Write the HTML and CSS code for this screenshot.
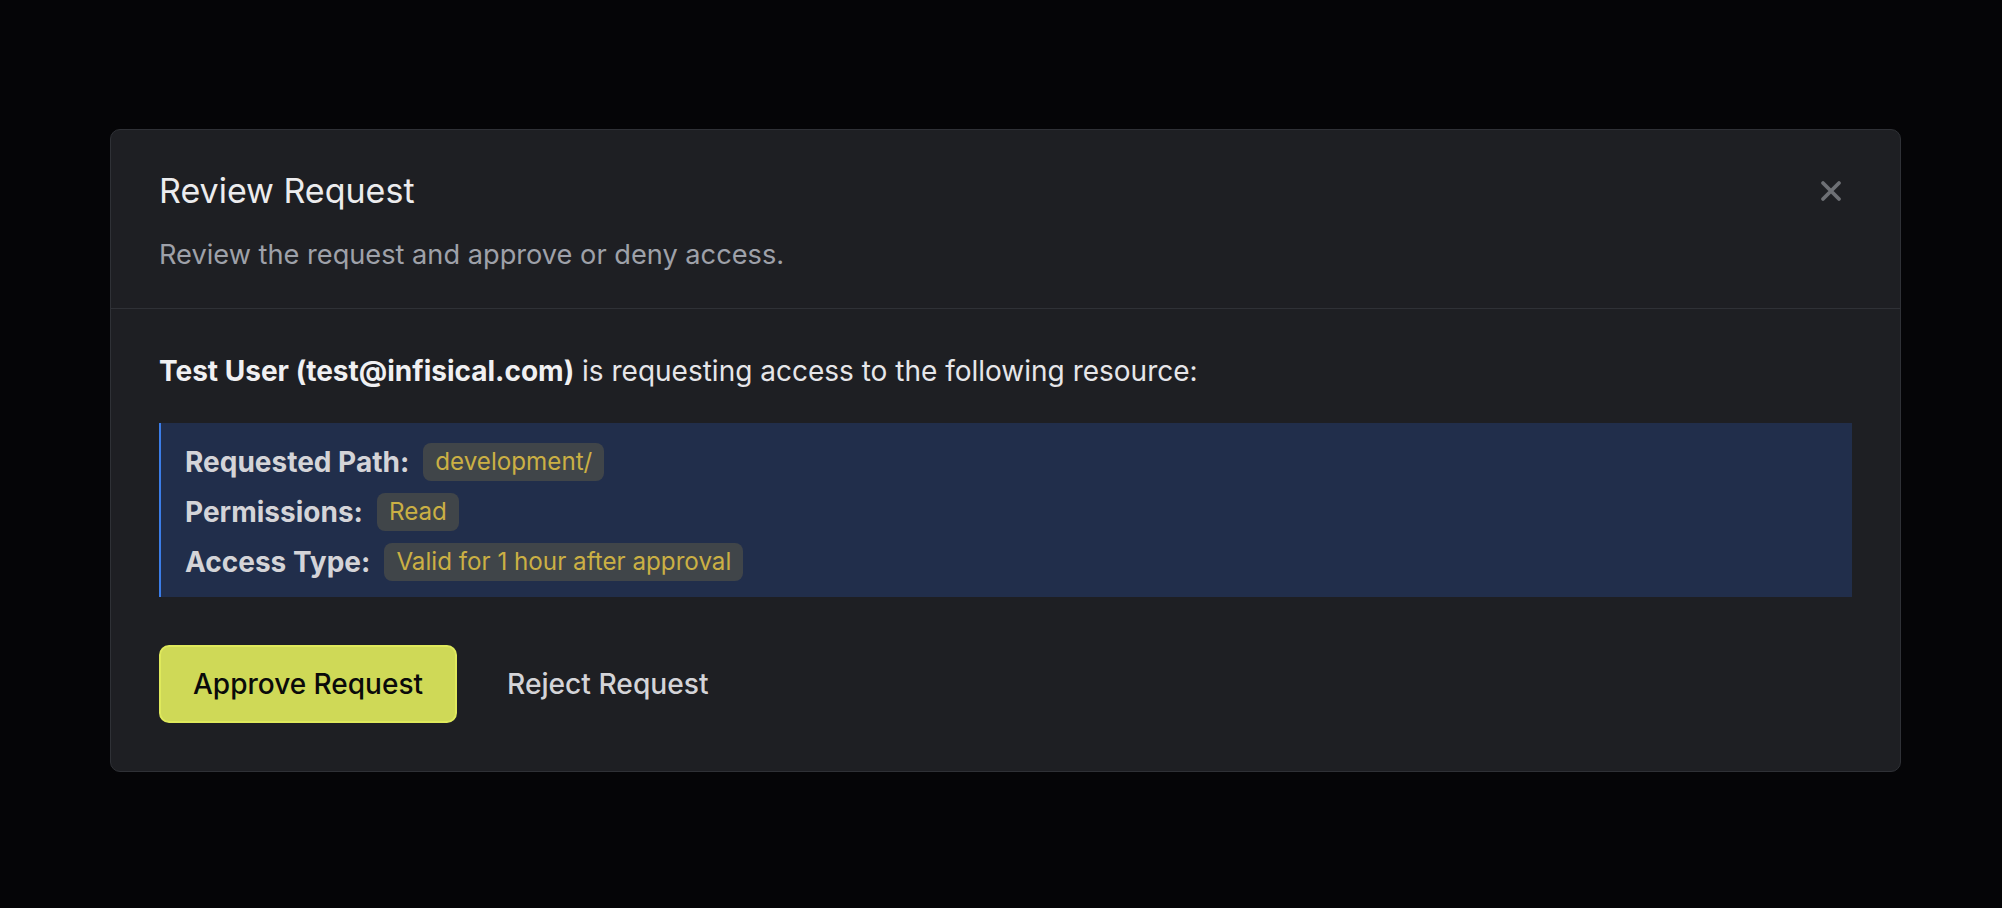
FILE: index.html
```html
<!DOCTYPE html>
<html lang="en">
<head>
<meta charset="utf-8">
<title>Review Request</title>
<link rel="stylesheet" href="styles.css">
</head>
<body>
<div class="page">
  <div class="modal">
    <div class="header">
      <div class="title-row">
        <h2 class="title">Review Request</h2>
        <button class="close" aria-label="Close">
          <svg width="22" height="22" viewBox="0 0 22 22" fill="none" stroke="currentColor" stroke-width="3.8" stroke-linecap="round"><path d="M3 3L19 19M19 3L3 19"/></svg>
        </button>
      </div>
      <p class="subtitle">Review the request and approve or deny access.</p>
    </div>
    <div class="body">
      <p class="intro"><strong>Test User (test@infisical.com)</strong> is requesting access to the following resource:</p>
      <div class="details">
        <div class="row"><span class="label">Requested Path:</span><span class="badge">development/</span></div>
        <div class="row"><span class="label">Permissions:</span><span class="badge">Read</span></div>
        <div class="row"><span class="label">Access Type:</span><span class="badge">Valid for 1 hour after approval</span></div>
      </div>
      <div class="actions">
        <button class="btn-approve">Approve Request</button>
        <button class="btn-reject">Reject Request</button>
      </div>
    </div>
  </div>
</div>
</body>
</html>
```
FILE: styles.css
```css
* { box-sizing: border-box; }
html, body { margin: 0; padding: 0; }
body {
  background: #050507;
  font-family: Inter, "Noto Sans", "Liberation Sans", sans-serif;
  width: 2002px;
  height: 908px;
  overflow: hidden;
}
.page {
  padding: 129px 0 0 110px;
}
.modal {
  width: 1791px;
  background: #1e1f23;
  border: 1px solid #2f3136;
  border-radius: 10px;
}
.header {
  padding: 39px 48px 33px 48px;
  border-bottom: 1px solid #2f3136;
}
.title-row {
  display: flex;
  align-items: center;
  justify-content: space-between;
  height: 44px;
}
.title {
  margin: 0;
  font-size: 34px;
  line-height: 44px;
  font-weight: 400;
  color: #ececee;
}
.close {
  width: 42px;
  height: 42px;
  padding: 0;
  background: none;
  border: none;
  color: #6e7075;
  display: flex;
  align-items: center;
  justify-content: center;
}
.subtitle {
  margin: 22px 0 0 0;
  font-size: 27.2px;
  line-height: 40px;
  color: #9ea1a9;
}
.body {
  padding: 42px 48px 48px 48px;
}
.intro {
  margin: 0;
  font-size: 28px;
  line-height: 40px;
  color: #e6e6e9;
}
.intro strong {
  font-weight: 700;
  color: #f0f0f2;
}
.details {
  margin-top: 32px;
  background: #212e4b;
  border-left: 2px solid #3b7de8;
  padding: 20px 24px 16px 24px;
  display: flex;
  flex-direction: column;
  gap: 12px;
}
.row {
  display: flex;
  align-items: center;
  gap: 14px;
  height: 38px;
}
.label {
  font-size: 28px;
  font-weight: 700;
  color: #d4d4d8;
}
.badge {
  background: #404549;
  color: #cbb044;
  font-size: 24.2px;
  line-height: 38px;
  height: 38px;
  padding: 0 12px;
  border-radius: 8px;
}
.actions {
  margin-top: 48px;
  display: flex;
  align-items: center;
  gap: 50px;
}
.btn-approve {
  height: 78px;
  width: 298px;
  background: #cfd957;
  border: 2px solid #dfe95c;
  border-radius: 10px;
  color: #0a0a0a;
  font-family: inherit;
  font-size: 28px;
  font-weight: 500;
  padding: 0;
}
.btn-reject {
  background: none;
  border: none;
  padding: 0;
  color: #d4d4d8;
  font-family: inherit;
  font-size: 28.2px;
  font-weight: 500;
}
```
